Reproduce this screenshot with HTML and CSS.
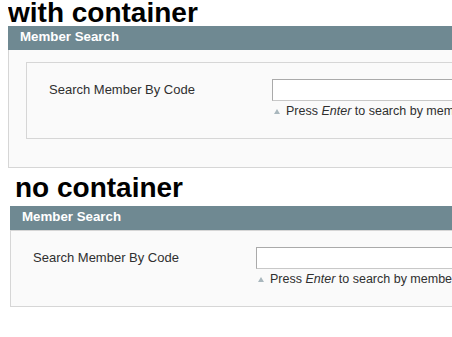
FILE: index.html
```html
<!DOCTYPE html>
<html lang="en">
  <head>
    <meta charset="UTF-8">
    <meta name="viewport" content="width=device-width, initial-scale=1.0">
    <title>Member Search</title>
    <link rel="stylesheet" href="styles.css">
  </head>
  <body>
    <!-- Search panel wrapped in an extra fieldset -->
    <h1 class="demo-title">with container</h1>
    <div class="entry-edit">
      <div class="entry-edit-head">
        <h4>Member Search</h4>
      </div>
      <div class="entry-edit-body">
        <div class="fieldset">
          <div class="form-row">
            <label class="form-label" for="member-code-1">Search Member By Code</label>
            <div class="form-value">
              <input type="text" id="member-code-1" class="input-text">
              <p class="note"><span class="note-arrow"></span>Press <em>Enter</em> to search by member code</p>
            </div>
          </div>
        </div>
      </div>
    </div>

    <!-- Same panel, fieldset straight under the head -->
    <div class="plain">
      <h1 class="demo-title demo-title-plain">no container</h1>
      <div class="entry-edit">
        <div class="entry-edit-head">
          <h4>Member Search</h4>
        </div>
        <div class="fieldset">
          <div class="form-row">
            <label class="form-label" for="member-code-2">Search Member By Code</label>
            <div class="form-value">
              <input type="text" id="member-code-2" class="input-text">
              <p class="note"><span class="note-arrow"></span>Press <em>Enter</em> to search by member code</p>
            </div>
          </div>
        </div>
      </div>
    </div>
  </body>
</html>
```

FILE: styles.css
```css
body {
  margin: 0 0 0 8px;
  overflow: hidden;
  font-family: Arial, "Liberation Sans", Helvetica, sans-serif;
  font-size: 13px;
  color: #2f2f2f;
  background: #fff;
}

.demo-title {
  margin: 0;
  font-size: 28px;
  line-height: 26px;
  font-weight: bold;
  color: #000;
}

.demo-title-plain {
  margin: 7px 0 5px 5px;
}

.plain {
  margin-left: 2px;
}

.entry-edit {
  width: 640px;
}

.entry-edit-head {
  background: #6f8992;
  padding: 2px 12px 4px;
}

.entry-edit-head h4 {
  margin: 0;
  font-size: 13.3px;
  line-height: 18px;
  font-weight: bold;
  color: #fff;
}

.entry-edit-body {
  background: #fafafa;
  border: 1px solid #d6d6d6;
  border-top: none;
  padding: 12px 17px 28px;
}

.fieldset {
  background: #fafafa;
  border: 1px solid #d6d6d6;
  padding: 16px 22px 20px;
}

.form-row {
  display: flex;
  align-items: flex-start;
}

.form-label {
  width: 223px;
  flex-shrink: 0;
  line-height: 22px;
}

.input-text {
  display: block;
  box-sizing: border-box;
  width: 320px;
  height: 22px;
  margin: 0;
  border: 1px solid #aaa;
  border-right-color: #c8c8c8;
  border-bottom-color: #c8c8c8;
  background: #fff;
}

.note {
  margin: 3px 0 0;
  font-size: 12.5px;
  line-height: 14px;
  white-space: nowrap;
}

.note-arrow {
  display: inline-block;
  width: 0;
  height: 0;
  margin: 0 6px 1px 2px;
  border-left: 3px solid transparent;
  border-right: 3px solid transparent;
  border-bottom: 5px solid #a9b7bd;
}
```
